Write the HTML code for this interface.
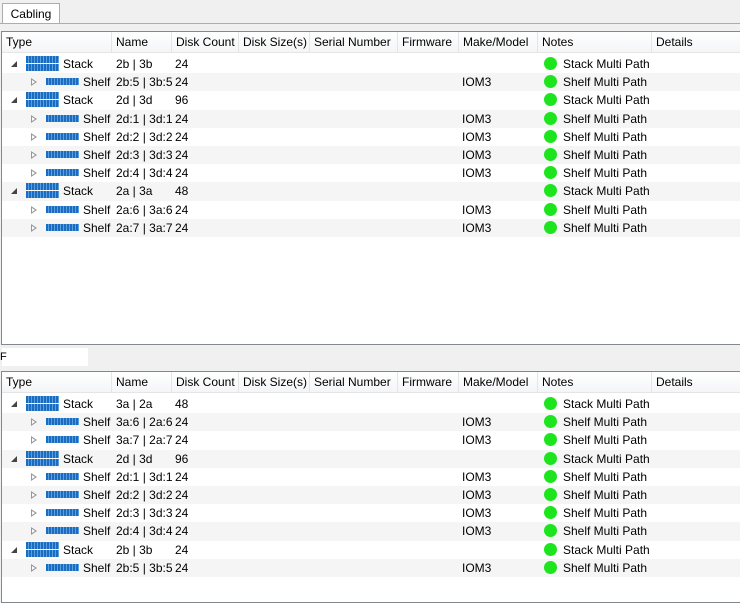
<!DOCTYPE html><html><head><style>
body{margin:0;width:740px;height:599px;background:#f0f0f0;font-family:"Liberation Sans",sans-serif;font-size:12px;color:#000;position:relative;overflow:hidden}
.tab{position:absolute;left:2px;top:3px;width:56px;height:20px;background:#fff;border:1px solid #adadad;border-bottom:none;text-align:center;line-height:20px}
.tabline{position:absolute;left:0;top:23px;width:740px;height:1px;background:#adadad}
.panel{position:absolute;left:1px;width:740px;background:#fff;border:1px solid #828790;box-sizing:border-box}
.hdr{position:absolute;left:0;top:0;width:100%;height:20px;background:linear-gradient(#fff,#f4f5f7);border-bottom:1px solid #e5e5e5}
.hdr span{position:absolute;top:0;height:20px;line-height:20px;padding-left:4px;border-right:1px solid #e5e5e5;box-sizing:border-box}
.row{position:absolute;left:0;width:100%;height:18.2px;line-height:18px}
.row.g{background:#f5f5f5}
.row span{position:absolute;top:0}
.tri{position:absolute;top:5px;width:0;height:0}
.exp{left:9px;top:6px;border-left:6px solid transparent;border-bottom:6px solid #444}
.col{left:29px;top:5px;border-left:6px solid #999;border-top:4px solid transparent;border-bottom:4px solid transparent}
.col::after{content:"";position:absolute;left:-5px;top:-2px;border-left:3px solid #fff;border-top:2px solid transparent;border-bottom:2px solid transparent}
.si{position:absolute;left:24px;top:1px;width:33px;height:15px;background:repeating-linear-gradient(90deg,#1a6cc0 0 2px,#5a9ee0 2px 3px);border:0}
.si::after{content:"";position:absolute;left:0;top:7px;width:100%;height:1px;background:#fff}
.hi{position:absolute;left:44px;top:5px;width:33px;height:7px;background:repeating-linear-gradient(90deg,#1a6cc0 0 2px,#5a9ee0 2px 3px)}
.dot{position:absolute;left:542px;top:2px;width:13px;height:13px;border-radius:50%;background:#1de51d}
</style></head><body>
<div class="tab">Cabling</div><div class="tabline"></div>
<div class="panel" style="top:31px;height:314px" id="p1"></div>
<div style="position:absolute;left:2px;top:348px;width:86px;height:18px;background:#fff"></div>
<div style="position:absolute;left:0;top:351px;font-size:11px">F</div>
<div class="panel" style="top:371px;height:232px" id="p2"></div>
<script>
const cols=[["Type",0,110],["Name",110,60],["Disk Count",170,67],["Disk Size(s)",237,71],["Serial Number",308,88],["Firmware",396,61],["Make/Model",457,79],["Notes",536,114],["Details",650,90]];
function build(id,rows){const p=document.getElementById(id);let h='<div class="hdr">';cols.forEach(c=>h+=`<span style="left:${c[1]}px;width:${c[2]}px">${c[0]}</span>`);h+='</div>';
rows.forEach((r,i)=>{const st=r[0]=='S';const top=23+i*18.2;h+=`<div class="row${i%2?' g':''}" style="top:${top}px">`;
if(st){h+='<div class="tri exp"></div><div class="si"></div><span style="left:61px">Stack</span>';}else{h+='<div class="tri col"></div><div class="hi"></div><span style="left:81px">Shelf</span>';}
h+=`<span style="left:114px">${r[1]}</span><span style="left:173px">${r[2]}</span>`;
if(!st)h+='<span style="left:460px">IOM3</span>';
h+=`<div class="dot"></div><span style="left:561px">${st?'Stack':'Shelf'} Multi Path</span></div>`;});
p.innerHTML=h;}
build('p1',[["S","2b | 3b",24],["H","2b:5 | 3b:5",24],["S","2d | 3d",96],["H","2d:1 | 3d:1",24],["H","2d:2 | 3d:2",24],["H","2d:3 | 3d:3",24],["H","2d:4 | 3d:4",24],["S","2a | 3a",48],["H","2a:6 | 3a:6",24],["H","2a:7 | 3a:7",24]]);
build('p2',[["S","3a | 2a",48],["H","3a:6 | 2a:6",24],["H","3a:7 | 2a:7",24],["S","2d | 3d",96],["H","2d:1 | 3d:1",24],["H","2d:2 | 3d:2",24],["H","2d:3 | 3d:3",24],["H","2d:4 | 3d:4",24],["S","2b | 3b",24],["H","2b:5 | 3b:5",24]]);
</script>
</body></html>
